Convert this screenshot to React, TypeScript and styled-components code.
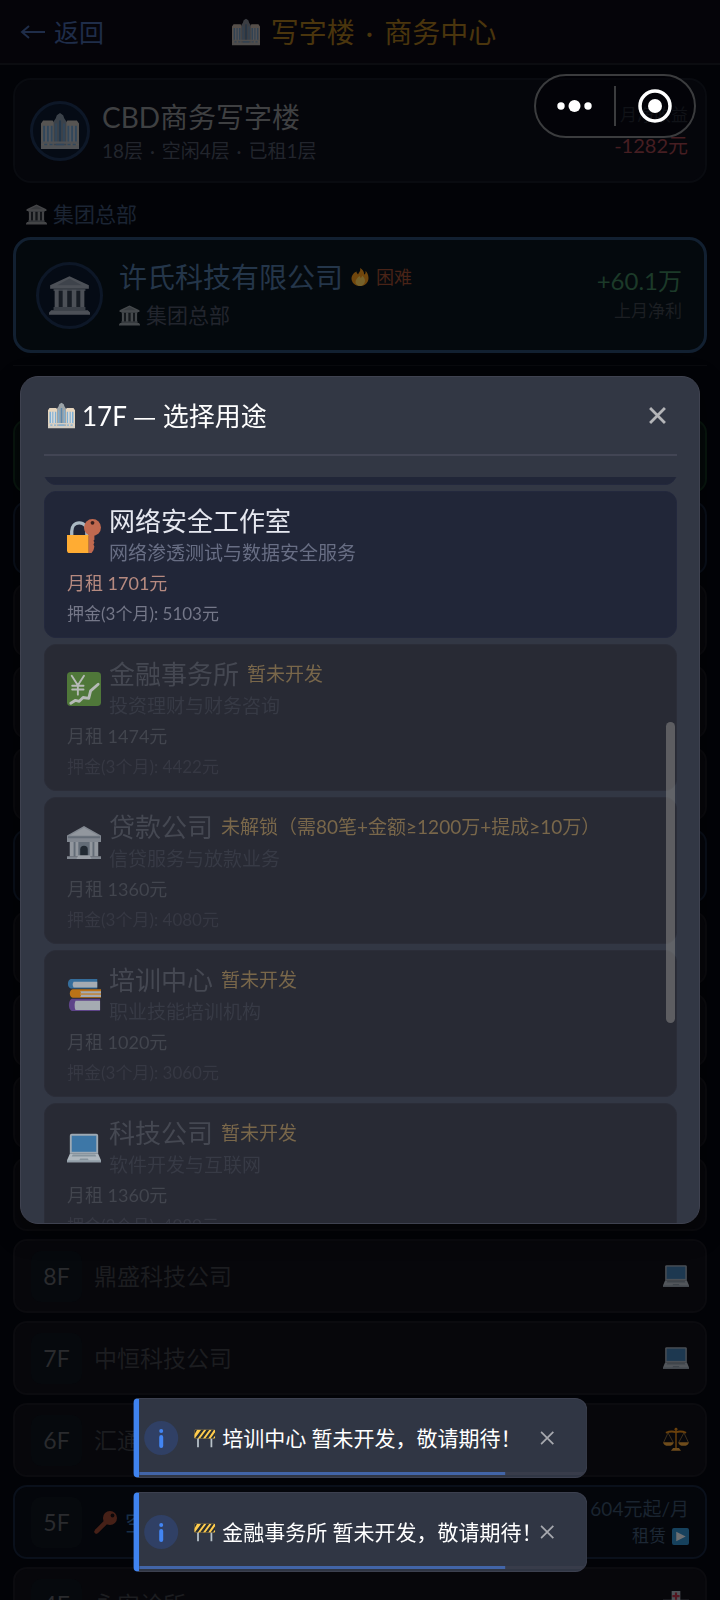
import React, { useLayoutEffect, useRef } from 'react';
import styled, { createGlobalStyle } from 'styled-components';

const Global = createGlobalStyle`
  * { box-sizing: border-box; }
  html, body { margin: 0; background: #020307; }
  body {
    font-family: Lato, "Noto Sans CJK SC", sans-serif;
    font-weight: 400;
    color: #fff;
  }
  button { font: inherit; color: inherit; background: none; border: 0; margin: 0; padding: 0; text-align: left; cursor: pointer; }
  h1, h2, h3, p, ul { margin: 0; padding: 0; font-weight: 400; list-style: none; }
  svg { display: block; flex: none; }
`;

/* ---------- icons ---------- */

type IconProps = { size: number; dim?: number };

const Svg = styled.svg<{ $dim?: number }>`
  opacity: ${(p) => p.$dim ?? 1};
`;

const Icon = ({ size, dim, box = 36, children }: IconProps & { box?: number; children: React.ReactNode }) => (
  <Svg width={size} height={size} viewBox={`0 0 ${box} ${box}`} $dim={dim} aria-hidden="true">
    {children}
  </Svg>
);

const Building = (p: IconProps) => (
  <Icon {...p}>
    <path d="M0 34V11l2-3h9l2 3v23zM23 34V11l2-3h9l2 3v23z" fill="#e6d5bd" />
    <path d="M12 34V9l2-3 1-3 3-2 3 2 1 3 2 3v25z" fill="#9ba3a8" />
    <path d="M2 13h2v16H2zM5.500 13h2v16h-2zM9 13h2v16H9zM25 13h2v16h-2zM28.500 13h2v16h-2zM32 13h2v16h-2z" fill="#7fb0d6" />
    <path d="M13.500 11h1.500v18h-1.500zM21 11h1.500v18H21z" fill="#7fb0d6" />
    <path d="M17 8h2v21h-2z" fill="#5d88ab" />
    <path d="M4 13h1.500v16H4zM7.500 13H9v16H7.500zM27 13h1.500v16H27zM30.500 13H32v16h-1.500z" fill="#d8dcde" />
    <path d="M0 28h36v2H0zM0 31.500h36V35H0z" fill="#d3cdc3" />
    <path d="M3 30h3v1.500H3zM8 30h3v1.500H8zM14 30h8v1.500h-8zM25 30h3v1.500h-3zM30 30h3v1.500h-3z" fill="#7fb0d6" />
  </Icon>
);

const Temple = (p: IconProps) => (
  <Icon {...p}>
    <path d="M18 1L1 9v3h34V9z" fill="#dcdcdc" />
    <path d="M18 3L7 9h22z" fill="#b3b5b8" />
    <path d="M4 12h28v2H4z" fill="#a9acb0" />
    <path d="M5 14h26v15H5z" fill="#3c4043" />
    <path d="M5 13h3.500v16H5zM12 13h4v16h-4zM20 13h4v16h-4zM27.500 13H31v16h-3.500z" fill="#dcdcdc" />
    <path d="M4 28h28v3H4z" fill="#a9acb0" />
    <path d="M2 31h32l2 2v2H0v-2z" fill="#dcdcdc" />
  </Icon>
);

const Flame = (p: IconProps) => (
  <Icon {...p}>
    <path d="M35 20c0-6-3-12-6-14 1 4-1 7-3 7C27 7 22 2 18 0c2 6-2 8-4 13-1-2-3-3-3-6C6 9 1 15 1 21c0 8 7 15 17 15s17-7 17-16z" fill="#f4900c" />
    <path d="M28 25c0-4-3-8-6-10 0 3-1 4-3 5-1-2-1-3-2-4-4 3-8 7-8 12 0 4 4 8 9 8s10-4 10-11z" fill="#ffcc4d" />
  </Icon>
);

const LockKey = (p: IconProps) => (
  <Icon {...p}>
    <path d="M5 18v-5c0-5 3-9 8-9s8 4 8 9v5" fill="none" stroke="#aab8c2" strokeWidth="3.500" />
    <path d="M0 17h23v19H3q-3 0-3-3z" fill="#ffac33" />
    <path d="M23 16h6v6l-1 1 1 2-1 2 1 2-1 4-2 3h-3z" fill="#c1694f" />
    <circle cx="27" cy="9" r="9" fill="#c1694f" />
    <circle cx="27" cy="4" r="2" fill="#3a1f1c" />
  </Icon>
);

const ChartYen = (p: IconProps) => (
  <Icon {...p}>
    <rect width="36" height="36" rx="4" fill="#5c913b" />
    <path d="M5 4l6.500 10L18 4M11.500 14v10M5.500 14.500h12M5.500 18.500h12" fill="none" stroke="#e6ebe3" strokeWidth="2" strokeLinecap="round" />
    <path d="M4 33l5-3 4 1 4-4 6 1 2-8 8-7" fill="none" stroke="#e6ebe3" strokeWidth="3" strokeLinecap="round" strokeLinejoin="round" />
  </Icon>
);

const Bank = (p: IconProps) => (
  <Icon {...p}>
    <path d="M18 1L0 11v7h36v-7z" fill="#b8c1c9" />
    <path d="M18 3L3 11h30z" fill="#d3dae0" />
    <path d="M1 12h34v2H1z" fill="#8b97a2" />
    <path d="M3 18h30v15H3z" fill="#8795a1" />
    <path d="M3 18h4v15H3zM9 18h3v15H9zM24 18h3v15h-3zM29 18h4v15h-4z" fill="#d3dae0" />
    <path d="M14 33v-7q0-4 4-4t4 4v7z" fill="#1f2a33" />
    <path d="M0 33h36v3H0z" fill="#b8c1c9" />
    <path d="M12 32h12l2 4H10z" fill="#dfe5ea" />
  </Icon>
);

const Books = (p: IconProps) => (
  <Icon {...p}>
    <path d="M4 1h28v10H4q-3-1-3-5t3-5z" fill="#3b88c3" />
    <path d="M7 4h25v6H7q-2-3 0-6z" fill="#d5dde3" />
    <path d="M6 12h30v9H6q-3-1-3-4.500T6 12z" fill="#f4900c" />
    <path d="M14 14h22v6H14q2-3 0-6z" fill="#d5dde3" />
    <path d="M14 16h22v2H14z" fill="#f4b25a" />
    <path d="M5 22h30v13H5q-3-2-3-6.500T5 22z" fill="#744eaa" />
    <path d="M9 24h26v10H9q-2-5 0-10z" fill="#d5dde3" />
  </Icon>
);

const Laptop = (p: IconProps) => (
  <Icon {...p}>
    <path d="M5 3h26q2 0 2 2v19H3V5q0-2 2-2z" fill="#b9c6cf" />
    <path d="M5 5h26v17H5z" fill="#4289c1" />
    <path d="M3 24h30l3 7v2H0v-2z" fill="#ccd6dd" />
    <path d="M6 25h24l1 2H5z" fill="#9aaab4" />
    <path d="M14 29h8l1 2H13z" fill="#9aaab4" />
    <path d="M0 31h36v2H0z" fill="#aab8c2" />
  </Icon>
);

const Scales = (p: IconProps) => (
  <Icon {...p}>
    <path d="M17 2h2v28h-2z" fill="#f4900c" />
    <circle cx="18" cy="3" r="2" fill="#f4900c" />
    <path d="M4 8q7-3 14-1 7-2 14 1" fill="none" stroke="#f4900c" strokeWidth="2.500" />
    <path d="M7 8L1 21M7 8l7 13M29 8l-7 13M29 8l6 13" fill="none" stroke="#b98d46" strokeWidth="1" />
    <path d="M0 21h15q-1 5-7.500 5T0 21zM21 21h15q-1 5-7.500 5T21 21z" fill="#ffac33" />
    <path d="M14 29h8l3 4H11z" fill="#ffac33" />
  </Icon>
);

const Key = (p: IconProps) => (
  <Icon {...p}>
    <path d="M16 15l5 5L6 35l-3 1-3-3 2-4z" fill="#c1502e" />
    <circle cx="25" cy="11" r="11" fill="#c1502e" />
    <circle cx="29" cy="7" r="3" fill="#1b0d0a" />
  </Icon>
);

const Play = (p: IconProps) => (
  <Icon {...p}>
    <rect width="36" height="36" rx="4" fill="#2f93cf" />
    <path d="M9 8l20 10L9 28z" fill="#fff" />
  </Icon>
);

const Hospital = (p: IconProps) => (
  <Icon {...p}>
    <path d="M12 0h12v12h12v24H0V12h12z" fill="#ccd6dd" />
    <path d="M16.500 2h3v3.500H23v3h-3.500V12h-3V8.500H13v-3h3.500z" fill="#dd2e44" />
    <path d="M4 16h5v5H4zM27 16h5v5h-5z" fill="#5dadec" />
  </Icon>
);

const Barrier = (p: IconProps) => (
  <Icon {...p}>
    <path d="M5 17h3v16H5zM28 17h3v16h-3z" fill="#b9c3ca" />
    <rect y="3" width="36" height="15" rx="2" fill="#ffcc4d" />
    <path d="M1 18L12 3h5L6 18zM10 18L21 3h5L15 18zM19 18L30 3h4L24 18zM28 18l8-11v6l-4 5zM0 12V4l5-1z" fill="#292f33" />
  </Icon>
);

const Arrow = () => (
  <svg width="26" height="26" viewBox="0 0 26 26" fill="none" stroke="currentColor" strokeWidth="2" aria-hidden="true">
    <path d="M25 13H2M9 7l-7 6 7 6" />
  </svg>
);

const Cross = ({ size, weight }: { size: number; weight: number }) => (
  <svg width={size} height={size} viewBox="0 0 16 16" stroke="currentColor" strokeWidth={weight} aria-hidden="true">
    <path d="M1 1l14 14M15 1L1 15" />
  </svg>
);

/* Middle dots and dashes take the wider spacing of the Chinese face. */
const Dot = styled.span`
  padding: 0 2px;
`;

const Dash = styled.span`
  font-family: "Noto Sans CJK SC", sans-serif;
`;

/* ---------- page behind the dialog ---------- */

const Page = styled.div`
  height: 100vh;
  overflow: hidden;
`;

const TopBar = styled.header`
  display: grid;
  grid-template-columns: 1fr auto 1fr;
  align-items: center;
  height: 65px;
  padding: 0 20px;
  background: #050409;
  border-bottom: 2px solid #0b0c10;
`;

const BackButton = styled.button`
  display: flex;
  align-items: center;
  gap: 8px;
  font-size: 25px;
  line-height: 36px;
  color: #1f2d49;
`;

const PageTitle = styled.h1`
  display: flex;
  align-items: center;
  gap: 11px;
  padding-left: 8px;
  font-size: 28px;
  line-height: 40px;
  color: #4a350d;

  ${Dot} {
    padding: 0 4px;
  }
`;

const Main = styled.main`
  padding: 13px 13px 0;
`;

const Card = styled.section<{ $owned?: boolean }>`
  display: flex;
  align-items: center;
  gap: ${(p) => (p.$owned ? 16 : 12)}px;
  height: ${(p) => (p.$owned ? 116 : 105)}px;
  padding: ${(p) => (p.$owned ? '0 22px 0 20px' : '0 17px 0 15px')};
  background: ${(p) => (p.$owned ? '#04090d' : '#05060b')};
  border: ${(p) => (p.$owned ? '3px solid #122031' : '2px solid #090b10')};
  border-radius: 18px;
`;

const Disc = styled.div<{ $size: number }>`
  display: grid;
  place-items: center;
  flex: none;
  width: ${(p) => p.$size}px;
  height: ${(p) => p.$size}px;
  border: 3px solid #0d1727;
  border-radius: 50%;
  background: #050b15;
`;

const Info = styled.div`
  flex: 1;
  min-width: 0;
`;

const Name = styled.h2<{ $accent?: boolean }>`
  display: flex;
  align-items: center;
  gap: 8px;
  font-size: 28px;
  line-height: 40px;
  color: ${(p) => (p.$accent ? '#24364a' : '#3f4042')};
`;

const Difficulty = styled.span`
  display: flex;
  align-items: center;
  gap: 7px;
  font-size: 18px;
  line-height: 24px;
  color: #482317;
`;

const Meta = styled.p<{ $large?: boolean }>`
  display: ${(p) => (p.$large ? 'flex' : 'block')};
  align-items: center;
  gap: 6px;
  font-size: ${(p) => (p.$large ? 21 : 19)}px;
  line-height: ${(p) => (p.$large ? 36 : 28)}px;
  color: #22252d;
`;

const Figures = styled.div`
  text-align: right;
`;

const Caption = styled.p`
  font-size: 17px;
  line-height: 28px;
  color: #1c1f23;
`;

const Amount = styled.p<{ $gain?: boolean }>`
  font-size: ${(p) => (p.$gain ? 24 : 20)}px;
  line-height: 32px;
  color: ${(p) => (p.$gain ? '#1c3a29' : '#461e22')};
`;

const GroupLabel = styled.h3`
  display: flex;
  align-items: center;
  gap: 6px;
  height: 54px;
  padding: 8px 13px 0;
  font-size: 21px;
  line-height: 30px;
  color: #1b2433;
`;

const Divider = styled.hr`
  height: 1px;
  margin: 12px 0 53px;
  border: 0;
  background: #090a0e;
`;

const Floors = styled.ul`
  display: flex;
  flex-direction: column;
  gap: 8px;
`;

const tones = {
  plain: { bg: '#07070b', line: '#0b0b0f' },
  mine: { bg: '#040a0a', line: '#09170f' },
  vacant: { bg: '#04060b', line: '#0a101b' },
};

const FloorRow = styled.li<{ $tone: keyof typeof tones }>`
  display: flex;
  align-items: center;
  gap: 12px;
  height: 74px;
  padding: 0 16px;
  background: ${(p) => tones[p.$tone].bg};
  border: 2px solid ${(p) => tones[p.$tone].line};
  border-radius: 14px;
`;

const FloorNo = styled.span`
  display: grid;
  place-items: center;
  width: 51px;
  height: 51px;
  border-radius: 10px;
  background: #06090d;
  font-size: 23px;
  color: #2a2b2e;
`;

const Tenant = styled.span<{ $vacant?: boolean }>`
  display: flex;
  flex: 1;
  align-items: center;
  gap: 8px;
  font-size: 23px;
  line-height: 32px;
  color: ${(p) => (p.$vacant ? '#182e46' : '#1c1d20')};
`;

const Lease = styled.div`
  display: flex;
  flex-direction: column;
  align-items: flex-end;
  font-size: 19px;
  line-height: 28px;
  color: #1a2430;
`;

const LeaseButton = styled.button`
  display: flex;
  align-items: center;
  gap: 6px;
  font-size: 17px;
  line-height: 26px;
  color: #1d2835;
`;

type Floor = {
  no?: string;
  tenant?: string;
  tone?: keyof typeof tones;
  icon?: React.ReactNode;
};

const floors: Floor[] = [
  { tone: 'mine' },
  { tone: 'vacant' },
  {},
  {},
  {},
  { tone: 'vacant' },
  {},
  {},
  {},
  {},
  { no: '8F', tenant: '鼎盛科技公司', icon: <Laptop size={26} dim={0.38} /> },
  { no: '7F', tenant: '中恒科技公司', icon: <Laptop size={26} dim={0.38} /> },
  { no: '6F', tenant: '汇通', icon: <Scales size={26} dim={0.42} /> },
  { no: '5F', tenant: '空闲', tone: 'vacant' },
  { no: '4F', tenant: '永安诊所', icon: <Hospital size={26} dim={0.36} /> },
];

/* ---------- mini-program capsule ---------- */

const Capsule = styled.div`
  position: fixed;
  top: 74px;
  right: 24px;
  display: flex;
  align-items: center;
  width: 162px;
  height: 64px;
  border: 2px solid #3b3c3e;
  border-radius: 32px;
  background: rgba(1, 1, 4, 0.4);
`;

const CapsuleButton = styled.button`
  display: grid;
  place-items: center;
  flex: 1;
  height: 40px;

  & + & {
    border-left: 2px solid #3b3c3e;
  }
`;

/* ---------- dialog ---------- */

const Overlay = styled.div`
  position: fixed;
  inset: 0;
  display: flex;
  align-items: center;
  justify-content: center;
  padding: 0 20px;
  pointer-events: none;
`;

const Dialog = styled.div`
  position: relative;
  display: flex;
  flex-direction: column;
  width: 100%;
  height: 53vh;
  padding: 0 22px 0 23px;
  overflow: hidden;
  pointer-events: auto;
  background: #323744;
  border: 1px solid #3f4250;
  border-radius: 18px;
  box-shadow: 0 8px 24px rgba(0, 0, 0, 0.5);
`;

const DialogHead = styled.header`
  display: flex;
  flex: none;
  align-items: center;
  justify-content: space-between;
  height: 79px;
  margin-bottom: 21px;
  padding: 0 11px 0 4px;
  border-bottom: 2px solid #424554;
`;

const DialogTitle = styled.h2`
  display: flex;
  align-items: center;
  gap: 7px;
  font-size: 26px;
  line-height: 36px;
`;

const CloseButton = styled.button`
  display: grid;
  place-items: center;
  color: #b4b5b8;
`;

const Options = styled.div`
  display: flex;
  flex: 1;
  flex-direction: column;
  gap: 6px;
  min-height: 0;
  overflow-y: auto;
  scrollbar-width: none;
`;

const Thumb = styled.div`
  position: absolute;
  top: 345px;
  right: 24px;
  width: 9px;
  height: 301px;
  border-radius: 5px;
  background: rgba(128, 128, 128, 0.6);
`;

const Option = styled.button<{ $locked?: boolean }>`
  display: flex;
  flex: none;
  flex-direction: column;
  height: 147px;
  padding: 12px 22px;
  background: ${(p) => (p.$locked ? '#282a34' : '#212638')};
  border: 1px solid ${(p) => (p.$locked ? '#2b2d38' : '#23283d')};
  border-radius: 12px;
  --name: ${(p) => (p.$locked ? '#454852' : '#e6e8f0')};
  --note: ${(p) => (p.$locked ? '#373a45' : '#686e84')};
  --rent: ${(p) => (p.$locked ? '#42454e' : '#b68a80')};
  --deposit: ${(p) => (p.$locked ? '#363843' : '#747788')};
`;

const OptionHead = styled.span`
  display: flex;
  align-items: center;
  gap: 8px;
`;

const OptionName = styled.span`
  display: flex;
  align-items: center;
  gap: 8px;
  font-size: 26px;
  line-height: 34px;
  color: var(--name);
  white-space: nowrap;
`;

const Tag = styled.span`
  font-size: 19px;
  color: #79674a;
`;

const Note = styled.span`
  display: block;
  font-size: 19px;
  line-height: 30px;
  color: var(--note);
`;

const Rent = styled.span`
  font-size: 18px;
  line-height: 30px;
  color: var(--rent);
`;

const Deposit = styled.span`
  font-size: 17px;
  line-height: 32px;
  color: var(--deposit);
`;

type Use = {
  name?: string;
  note?: string;
  rent?: number;
  tag?: string;
  icon?: React.ReactNode;
};

const uses: Use[] = [
  {},
  { name: '网络安全工作室', note: '网络渗透测试与数据安全服务', rent: 1701, icon: <LockKey size={34} /> },
  { name: '金融事务所', note: '投资理财与财务咨询', rent: 1474, tag: '暂未开发', icon: <ChartYen size={34} dim={0.75} /> },
  {
    name: '贷款公司',
    note: '信贷服务与放款业务',
    rent: 1360,
    tag: '未解锁（需80笔+金额≥1200万+提成≥10万）',
    icon: <Bank size={34} dim={0.62} />,
  },
  { name: '培训中心', note: '职业技能培训机构', rent: 1020, tag: '暂未开发', icon: <Books size={34} dim={0.72} /> },
  { name: '科技公司', note: '软件开发与互联网', rent: 1360, tag: '暂未开发', icon: <Laptop size={34} dim={0.82} /> },
];

const UseDialog = () => {
  const list = useRef<HTMLDivElement>(null);

  useLayoutEffect(() => {
    if (list.current) list.current.scrollTop = 139;
  }, []);

  return (
    <Overlay>
      <Dialog role="dialog" aria-labelledby="use-title">
        <DialogHead>
          <DialogTitle id="use-title">
            <Building size={27} />
            <span>
              17F <Dash>—</Dash> 选择用途
            </span>
          </DialogTitle>
          <CloseButton aria-label="关闭">
            <Cross size={17} weight={2.6} />
          </CloseButton>
        </DialogHead>
        <Options ref={list}>
          {uses.map((u, i) => (
            <Option key={i} $locked={!!u.tag}>
              {u.name && u.rent && (
                <>
                  <OptionHead>
                    {u.icon}
                    <span>
                      <OptionName>
                        {u.name}
                        {u.tag && <Tag>{u.tag}</Tag>}
                      </OptionName>
                      <Note>{u.note}</Note>
                    </span>
                  </OptionHead>
                  <Rent>{`月租 ${u.rent}元`}</Rent>
                  <Deposit>{`押金(3个月): ${u.rent * 3}元`}</Deposit>
                </>
              )}
            </Option>
          ))}
        </Options>
        <Thumb />
      </Dialog>
    </Overlay>
  );
};

/* ---------- toasts ---------- */

const Toasts = styled.div`
  position: fixed;
  bottom: 28px;
  left: 50%;
  display: flex;
  flex-direction: column;
  gap: 14px;
  width: 63%;
  transform: translateX(-50%);
`;

const ToastBox = styled.div`
  position: relative;
  display: flex;
  align-items: center;
  height: 80px;
  padding: 0 32px 0 5px;
  overflow: hidden;
  background: #303644;
  border: 1px solid #3c404f;
  border-left: 6px solid #3f83f0;
  border-radius: 5px 12px 12px 5px;
`;

const Badge = styled.span`
  display: grid;
  place-items: center;
  flex: none;
  width: 34px;
  height: 34px;
  margin-right: 16px;
  border-radius: 50%;
  background: #304065;
`;

const Message = styled.p`
  display: flex;
  flex: 1;
  align-items: center;
  gap: 7px;
  min-width: 0;
  font-size: 21px;
  line-height: 30px;
  white-space: nowrap;
`;

const ToastClose = styled(CloseButton)`
  position: relative;
  color: #a6a8ae;
`;

const Track = styled.div`
  position: absolute;
  right: 0;
  bottom: 2px;
  left: 0;
  height: 3px;
  background: #383c4a;
`;

const Bar = styled.div`
  height: 100%;
  background: #4265a8;
`;

const Toast = ({ text, left }: { text: string; left: number }) => (
  <ToastBox role="status">
    <Badge>
      <svg width="6" height="20" viewBox="0 0 6 20" fill="#4285f4" aria-hidden="true">
        <circle cx="3" cy="3" r="2" />
        <rect x="1" y="7" width="4" height="13" rx="2" />
      </svg>
    </Badge>
    <Message>
      <Barrier size={21} />
      {text}
    </Message>
    <ToastClose aria-label="关闭提示">
      <Cross size={14} weight={2} />
    </ToastClose>
    <Track>
      <Bar style={{ width: `${left}%` }} />
    </Track>
  </ToastBox>
);

export default function App() {
  return (
    <Page>
      <Global />
      <TopBar>
        <BackButton>
          <Arrow />
          返回
        </BackButton>
        <PageTitle>
          <Building size={28} dim={0.36} />
          <span>
            写字楼 <Dot>·</Dot> 商务中心
          </span>
        </PageTitle>
      </TopBar>
      <Main>
        <Card>
          <Disc $size={60}>
            <Building size={38} dim={0.36} />
          </Disc>
          <Info>
            <Name>CBD商务写字楼</Name>
            <Meta>
              18层 <Dot>·</Dot> 空闲4层 <Dot>·</Dot> 已租1层
            </Meta>
          </Info>
          <Figures>
            <Caption>月净收益</Caption>
            <Amount>-1282元</Amount>
          </Figures>
        </Card>
        <GroupLabel>
          <Temple size={21} dim={0.3} />
          集团总部
        </GroupLabel>
        <Card $owned>
          <Disc $size={67}>
            <Temple size={41} dim={0.33} />
          </Disc>
          <Info>
            <Name $accent>
              许氏科技有限公司
              <Difficulty>
                <Flame size={18} dim={0.45} />
                困难
              </Difficulty>
            </Name>
            <Meta $large>
              <Temple size={21} dim={0.3} />
              集团总部
            </Meta>
          </Info>
          <Figures>
            <Amount $gain>+60.1万</Amount>
            <Caption>上月净利</Caption>
          </Figures>
        </Card>
        <Divider />
        <Floors>
          {floors.map((f, i) => (
            <FloorRow key={i} $tone={f.tone ?? 'plain'}>
              {f.no && <FloorNo>{f.no}</FloorNo>}
              {f.tenant && (
                <Tenant $vacant={f.tone === 'vacant'}>
                  {f.tone === 'vacant' && <Key size={23} dim={0.35} />}
                  {f.tenant}
                </Tenant>
              )}
              {f.icon}
              {f.no && f.tone === 'vacant' && (
                <Lease>
                  604元起/月
                  <LeaseButton>
                    租赁
                    <Play size={17} dim={0.42} />
                  </LeaseButton>
                </Lease>
              )}
            </FloorRow>
          ))}
        </Floors>
      </Main>
      <Capsule>
        <CapsuleButton aria-label="更多">
          <svg width="36" height="14" viewBox="0 0 36 14" fill="#fff" aria-hidden="true">
            <circle cx="4" cy="7" r="3.700" />
            <circle cx="17.500" cy="7" r="6" />
            <circle cx="31" cy="7" r="3.700" />
          </svg>
        </CapsuleButton>
        <CapsuleButton aria-label="退出">
          <svg width="34" height="34" viewBox="0 0 34 34" aria-hidden="true">
            <circle cx="17" cy="17" r="15" fill="none" stroke="#fff" strokeWidth="3.500" />
            <circle cx="17" cy="17" r="7" fill="#fff" />
          </svg>
        </CapsuleButton>
      </Capsule>
      <UseDialog />
      <Toasts>
        <Toast text="培训中心 暂未开发，敬请期待！" left={82} />
        <Toast text="金融事务所 暂未开发，敬请期待！" left={82} />
      </Toasts>
    </Page>
  );
}
